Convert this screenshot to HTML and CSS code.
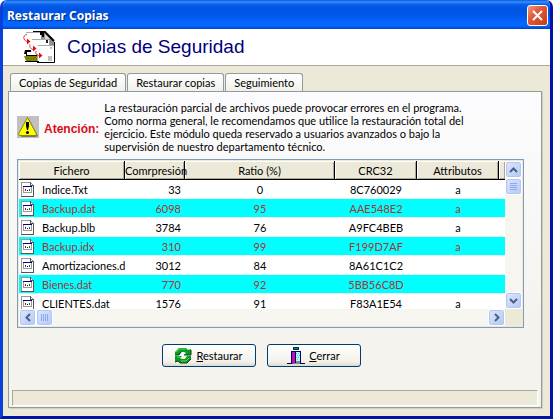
FILE: index.html
```html
<!DOCTYPE html>
<html lang="es">
<head>
    <meta charset="UTF-8">
    <meta name="viewport" content="width=device-width, initial-scale=1.0">
    <title>Restaurar Copias</title>
    <link rel="stylesheet" href="styles.css">
</head>
<body>
    <div class="window">
        <div class="titlebar">
            <span class="titlebar-text">Restaurar Copias</span>
            <button class="close-btn" aria-label="Cerrar ventana">
                <svg width="11" height="11" viewBox="0 0 11 11"><path d="M1 1l9 9M10 1l-9 9" stroke="#fff" stroke-width="2"/></svg>
            </button>
        </div>

        <div class="header">
            <svg class="header-icon" width="32" height="32" viewBox="0 0 32 32">
                <path d="M10 1h12l9 9v12H10z" fill="#909090"/>
                <path d="M10 1h12l9 9" fill="none" stroke="#000" stroke-width="2"/>
                <path d="M22 3v5h5z" fill="#d8d8d8"/>
                <path d="M4 19h10v6H4z" fill="#fff"/>
                <path d="M2 19h6v2H4v3h12v1H3v-2H1z" fill="#000"/>
                <path d="M1 25h14v5H3z" fill="#808000"/>
                <path d="M2 30h14v1H2z" fill="#000"/>
                <path d="M3 2h15v13H5z" fill="#fff"/>
                <path d="M3 1.500h14" stroke="#aaa" fill="none"/>
                <path d="M17 2h4v4h-2V4h-2z" fill="#000"/>
                <path d="M9 8h17v15H11z" fill="#fff"/>
                <path d="M9 8.500h17M26.500 9v5" fill="none" stroke="#a8a8a8"/>
                <path d="M23 9h2v3h-2z" fill="#222"/>
                <path d="M15 14h16v16H15z" fill="#fff"/>
                <path d="M15 14.500h16M14.500 23v7" fill="none" stroke="#a8a8a8"/>
                <path d="M27 16h2v2h-2zM25 25h4v5h-4z" fill="#c0c0c0"/>
                <path d="M31.500 11v20.500H14" fill="none" stroke="#000"/>
                <path d="M4 3.500Q0 4 1 8q1 2 3 2.500M7 13.500q-1 4 3 5M13 20q-1 4 3 5" fill="none" stroke="#e04040"/>
                <path d="M4 7.500l3.500 3-3.500 3zM10 14.500l3.500 3-3.500 3zM16 21.500l3.500 3-3.500 3z" fill="#e01010"/>
            </svg>
            <h1>Copias de Seguridad</h1>
        </div>

        <div class="content">
            <div class="tabs" role="tablist">
                <button class="tab" role="tab">Copias de Seguridad</button>
                <button class="tab" role="tab" aria-selected="true">Restaurar copias</button>
                <button class="tab" role="tab">Seguimiento</button>
            </div>

            <div class="panel">
                <div class="notice">
                    <svg class="warning-icon" width="22" height="22" viewBox="0 0 22 22">
                        <path d="M0 0h22v22H0z" fill="#c0c0c0"/>
                        <path d="M12 3l9 17-2 1H4z" fill="#777"/>
                        <path d="M10.500 1.500L1.500 18q0 1.500 1.500 1.500h15q1.500 0 1.500-1.500z" fill="#ff0" stroke="#8a8a00"/>
                        <path d="M9 6h3v4l-1 4h-1l-1-4z" fill="#000"/>
                        <circle cx="10.500" cy="16.500" r="1.500" fill="#000"/>
                    </svg>
                    <strong>Atención:</strong>
                    <p>La restauración parcial de archivos puede provocar errores en el programa.<br>
                    Como norma general, le recomendamos que utilice la restauración total del<br>
                    ejercicio. Este módulo queda reservado a usuarios avanzados o bajo la<br>
                    supervisión de nuestro departamento técnico.</p>
                </div>

                <div class="file-list">
                    <div class="file-view">
                        <table class="files">
                            <colgroup>
                                <col class="col-name">
                                <col class="col-size">
                                <col class="col-ratio">
                                <col class="col-crc">
                                <col class="col-attr">
                                <col class="col-rest">
                            </colgroup>
                            <thead>
                                <tr><th>Fichero</th><th>Comrpresión</th><th>Ratio (%)</th><th>CRC32</th><th>Attributos</th><th></th></tr>
                            </thead>
                            <tbody id="fileRows"></tbody>
                        </table>
                    </div>
                    <div class="scroll-v">
                        <button class="scroll-btn" aria-label="Subir"><svg width="9" height="6" viewBox="0 0 9 6"><path d="M1 5l3.500-3.500L8 5"/></svg></button>
                        <div class="thumb"><svg width="7" height="8" viewBox="0 0 7 8"><path d="M0 .5h7M0 2.500h7M0 4.500h7M0 6.500h7"/></svg></div>
                        <button class="scroll-btn scroll-end" aria-label="Bajar"><svg width="9" height="6" viewBox="0 0 9 6"><path d="M1 1l3.500 3.500L8 1"/></svg></button>
                    </div>
                    <div class="scroll-h">
                        <button class="scroll-btn" aria-label="Izquierda"><svg width="6" height="9" viewBox="0 0 6 9"><path d="M5 1L1.500 4.500 5 8"/></svg></button>
                        <div class="thumb"><svg width="8" height="7" viewBox="0 0 8 7"><path d="M.5 0v7M2.500 0v7M4.500 0v7M6.500 0v7"/></svg></div>
                        <button class="scroll-btn scroll-end" aria-label="Derecha"><svg width="6" height="9" viewBox="0 0 6 9"><path d="M1 1l3.500 3.500L1 8"/></svg></button>
                    </div>
                </div>

                <div class="actions">
                    <button class="btn">
                        <svg width="18" height="17" viewBox="0 0 18 17">
                            <path d="M1 8V5l4-4h7l2 2 3-1v6h-7l2-2-2-1H7L5 8z" fill="#0a9a20"/>
                            <path d="M17 9v3l-4 4H6l-2-2-3 1V9h7l-2 2 2 1h3l2-3z" fill="#0a9a20"/>
                            <path d="M2 5l4-3h6M3 10h3M7 14h5l3-3" fill="none" stroke="#58d860"/>
                            <path d="M1 8h4l2-3M10 8h7V3M1 15l3-1 2 2h7l4-4" fill="none" stroke="#043c20"/>
                        </svg>
                        <span><u>R</u>estaurar</span>
                    </button>
                    <button class="btn">
                        <svg width="18" height="18" viewBox="0 0 18 18" shape-rendering="crispEdges">
                            <path d="M6 0h6v3H6z" fill="#034"/>
                            <path d="M7 1h4v1H7z" fill="#0a8a40"/>
                            <path d="M4 4h10v12H4z" fill="#fff"/>
                            <path d="M5 5h4v12H5z" fill="#c010b0"/>
                            <path d="M9 5h4v9H9z" fill="#b8f8ff"/>
                            <path d="M9 6h1v1H9zM11 6h1v1h-1zM10 8h1v1h-1zM12 8h1v1h-1zM9 10h1v1H9zM11 10h1v1h-1zM10 12h1v1h-1z" fill="#40c8e0"/>
                            <path d="M6 17l4-3h3v3z" fill="#888"/>
                            <path d="M0 16.500h4.500v-12h9v12H18M8.500 5v11" fill="none" stroke="#006"/>
                        </svg>
                        <span><u>C</u>errar</span>
                    </button>
                </div>

                <div class="statusbar"></div>
            </div>
        </div>
    </div>

    <script>
        const files = [
            ['Indice.Txt', 33, 0, '8C760029', 'a'],
            ['Backup.dat', 6098, 95, 'AAE548E2', 'a'],
            ['Backup.blb', 3784, 76, 'A9FC4BEB', 'a'],
            ['Backup.idx', 310, 99, 'F199D7AF', 'a'],
            ['Amortizaciones.dat', 3012, 84, '8A61C1C2', ''],
            ['Bienes.dat', 770, 92, '5BB56C8D', ''],
            ['CLIENTES.dat', 1576, 91, 'F83A1E54', 'a']
        ];

        const fileIcon = `
            <svg width="13" height="16" viewBox="0 0 13 16" shape-rendering="crispEdges">
                <path d="M.5 1.500h9l3 3v11H.5z" fill="#fff" stroke="#999"/>
                <path d="M9.500 1v3.500h3v11H0" fill="none" stroke="#555"/>
                <path d="M2.500 5.500h8v6h-8z" fill="#fff" stroke="#999"/>
                <path d="M2 5h9v1H2z" fill="#008"/>
                <path d="M4 8h1v2H4z" fill="#d00"/>
                <path d="M6 9h1v1H6z" fill="#00c"/>
                <path d="M8 8h1v2H8z" fill="#080"/>
            </svg>`;

        document.getElementById('fileRows').innerHTML = files.map(f => `
            <tr>
                <td class="name">${fileIcon}<span>${f[0]}</span></td>
                <td class="size">${f[1]}</td>
                <td>${f[2]}</td>
                <td>${f[3]}</td>
                <td>${f[4]}</td>
                <td></td>
            </tr>`).join('');
    </script>
</body>
</html>
```
FILE: styles.css
```css
* {
    box-sizing: border-box;
}
body {
    margin: 0;
    background: #fff;
    color: #000;
    font-family: Lato, "Liberation Sans", sans-serif;
    font-size: 11px;
}
button {
    font: inherit;
    color: inherit;
    padding: 0;
    margin: 0;
}
svg {
    display: block;
    flex: none;
}
.window {
    display: flex;
    flex-direction: column;
    min-height: 100vh;
    background: #ece9d8;
    border: 3px solid #0831d9;
    border-color: #0a50e0 #0014a8 #0014a8 #0a40d8;
    border-top: none;
    border-radius: 7px 7px 0 0;
    overflow: hidden;
}
.titlebar {
    display: flex;
    align-items: center;
    justify-content: space-between;
    height: 29px;
    margin: 0 -3px;
    padding: 2px 5px 0 7px;
    background: linear-gradient(#0a58d8 0, #3a90ff 2px, #0a62ee 4px, #0054e3 8px, #0056e8 15px, #0466ff 22px, #0466ff 26px, #0040c0 29px);
}
.titlebar-text {
    color: #fff;
    font-family: "Noto Sans", "Open Sans", sans-serif;
    font-size: 12px;
    font-weight: bold;
    text-shadow: 1px 1px 1px #002a80;
}
.close-btn {
    display: flex;
    align-items: center;
    justify-content: center;
    width: 21px;
    height: 21px;
    border: 1px solid #fff;
    border-radius: 3px;
    background: linear-gradient(135deg, #ee9a80, #e2583a 40%, #c83c14);
}
.header {
    display: flex;
    align-items: center;
    gap: 12px;
    height: 37px;
    padding-left: 20px;
    background: #fff;
    border-bottom: 1px solid #aca899;
}
.header h1 {
    margin: 0;
    color: #000080;
    font-family: "Liberation Sans", Arial, sans-serif;
    font-size: 19px;
    font-weight: normal;
    line-height: 32px;
}
.content {
    display: flex;
    flex: 1;
    flex-direction: column;
    padding: 7px 8px 8px 5px;
}
.tabs {
    display: flex;
    gap: 1px;
    padding-left: 2px;
}
.tab {
    height: 18px;
    padding: 0 8px;
    border: 1px solid #919b9c;
    border-bottom: none;
    border-radius: 3px 3px 0 0;
    background: linear-gradient(#fff, #f0f0ea);
}
.panel {
    display: flex;
    flex: 1;
    flex-direction: column;
    padding: 9px 3px 1px 3px;
    border: 1px solid #919b9c;
    box-shadow: 1px 1px 0 #d0cebf;
    background: linear-gradient(#fcfcfe, #f4f3ee 75%);
}
.notice {
    display: flex;
    align-items: center;
    gap: 5px;
    padding-left: 5px;
}
.notice strong {
    color: #d80c18;
    font-family: "Liberation Sans", Arial, sans-serif;
    font-size: 12px;
    margin-top: 4px;
}
.notice p {
    margin: 0;
    line-height: 13px;
    white-space: nowrap;
}

/* File list */
.file-list {
    display: grid;
    grid-template-columns: 1fr 17px;
    grid-template-rows: 148px 17px;
    margin: 6px 14px 0 5px;
    padding: 1px;
    border: 1px solid #7f9db9;
    background: #ece9d8;
}
.file-view {
    overflow: hidden;
    background: #fff;
}
.files {
    width: 100%;
    table-layout: fixed;
    border-collapse: separate;
    border-spacing: 0;
}
.col-name {
    width: 106px;
}
.col-size {
    width: 60px;
}
.col-crc,
.col-attr {
    width: 82px;
}
.col-rest {
    width: 6px;
}
.files th {
    height: 19px;
    padding: 0;
    border-right: 1px solid #000;
    border-bottom: 1px solid #000;
    background: #ece9d8;
    box-shadow: inset 1px 1px 0 #fff, inset -1px -1px 0 #aca899;
    font-weight: normal;
    white-space: nowrap;
}
.files th:last-child {
    border-right: none;
}
.files td {
    height: 19px;
    padding: 0;
    border-bottom: 1px solid #e8f4f4;
    text-align: center;
    white-space: nowrap;
    overflow: hidden;
}
.files tbody tr:nth-child(even) td {
    background: #00ffff;
    color: #b03030;
}
.files .name {
    text-align: left;
}
.files .name svg,
.files .name span {
    display: inline-block;
    vertical-align: middle;
}
.files .name svg {
    margin: 0 8px 0 2px;
}
.files .size {
    padding-right: 4px;
    text-align: right;
}

/* Scroll bars */
.scroll-v,
.scroll-h {
    display: flex;
    background: #f6f5f0;
}
.scroll-v {
    flex-direction: column;
}
.scroll-btn,
.thumb {
    display: flex;
    align-items: center;
    justify-content: center;
    width: 17px;
    height: 17px;
    border: 1px solid #fff;
    border-radius: 3px;
    background: linear-gradient(135deg, #dce6ff, #b4c8f6);
    box-shadow: inset 0 0 0 1px #b4c6f0;
}
.scroll-btn path {
    fill: none;
    stroke: #4d6185;
    stroke-width: 2;
}
.thumb path {
    stroke: #8ca8ee;
}
.scroll-v .scroll-end {
    margin-top: auto;
}
.scroll-h .scroll-end {
    margin-left: auto;
}

/* Buttons */
.actions {
    display: flex;
    justify-content: center;
    gap: 11px;
    margin-top: 16px;
    padding-right: 28px;
}
.btn {
    display: flex;
    align-items: center;
    justify-content: center;
    gap: 4px;
    width: 94px;
    height: 23px;
    border: 1px solid #003c74;
    border-radius: 3px;
    background: linear-gradient(#fff, #f2f1ea 80%, #dcd8cc);
}
.statusbar {
    height: 16px;
    margin-top: auto;
    border-top: 1px solid #aca899;
    border-left: 1px solid #aca899;
    border-right: 1px solid #fff;
    border-bottom: 1px solid #fff;
    background: #ece9d8;
}
```
